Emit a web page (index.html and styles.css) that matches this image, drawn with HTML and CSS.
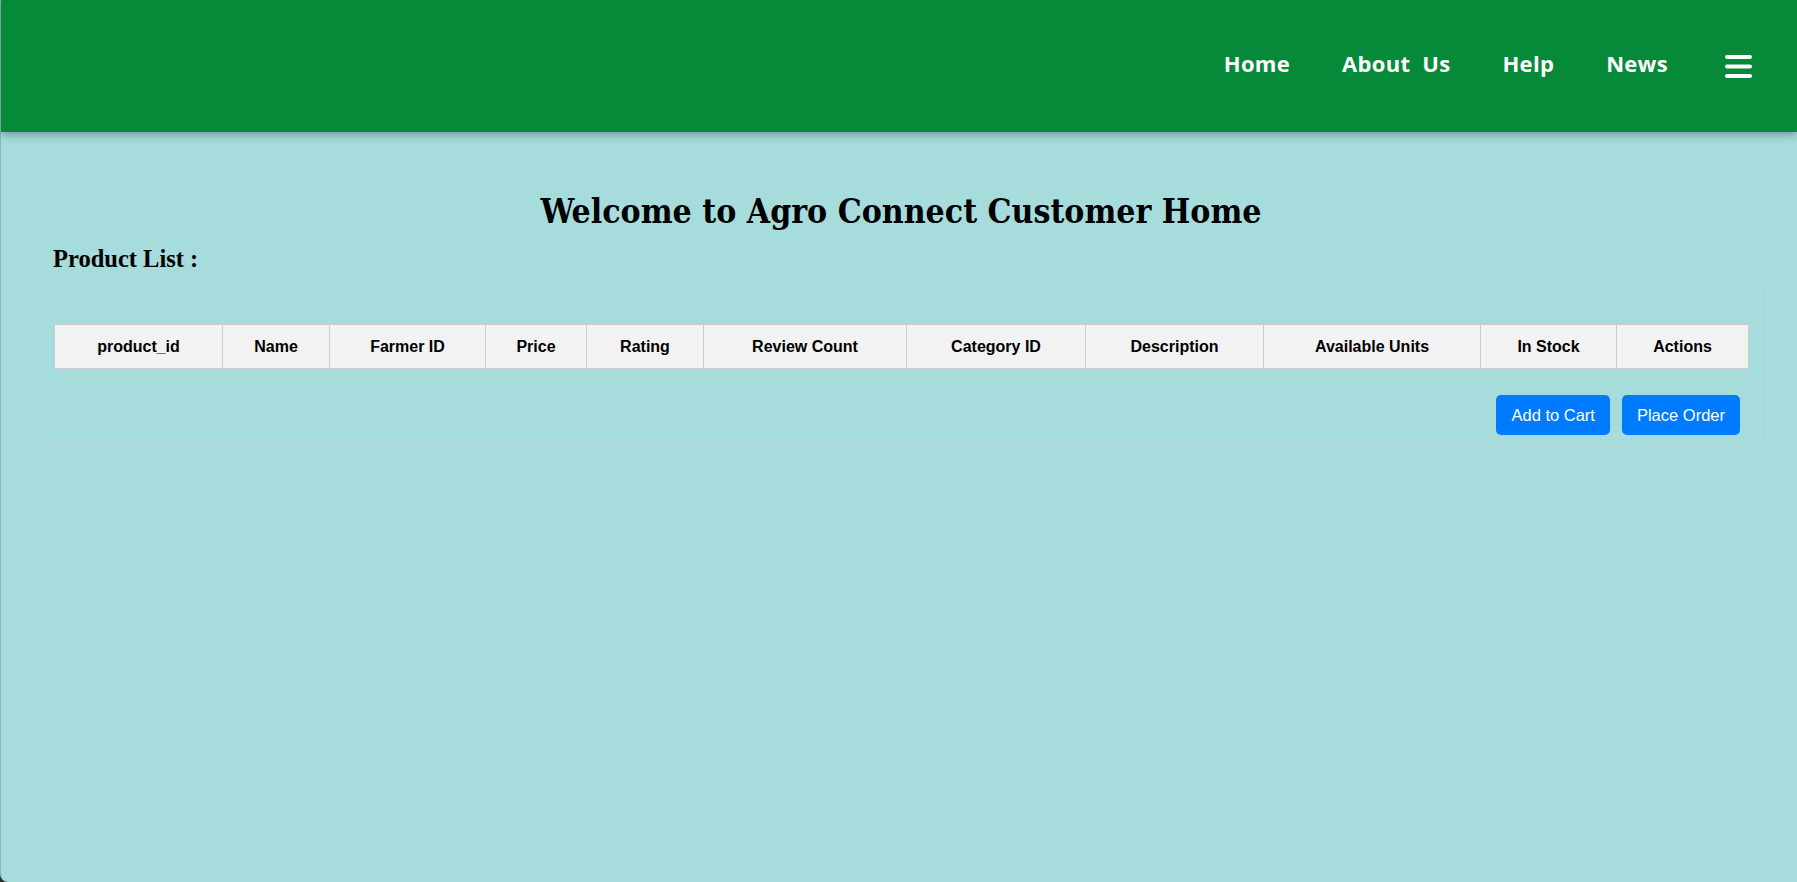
FILE: index.html
```html
<!DOCTYPE html>
<html lang="en">
<head>
<meta charset="utf-8">
<title>Agro Connect - Customer Home</title>
<link rel="stylesheet" href="styles.css">
</head>
<body>
<div class="frame">
  <header class="topbar">
    <nav class="nav">
      <a class="nav-link" href="#">Home</a>
      <a class="nav-link" href="#">About Us</a>
      <a class="nav-link" href="#">Help</a>
      <a class="nav-link" href="#">News</a>
      <button class="menu-toggle" aria-label="Menu">
        <svg width="27" height="23" viewBox="0 0 27 23">
          <path d="M2 2H25M2 11.5H25M2 21H25" stroke="#fff" stroke-width="4" stroke-linecap="round" fill="none"/>
        </svg>
      </button>
    </nav>
  </header>
  <main class="content">
    <h1 class="title">Welcome to Agro Connect Customer Home</h1>
    <h2 class="section-title">Product List :</h2>
    <section class="card">
      <table class="products">
        <colgroup>
          <col class="c-id"><col class="c-name"><col class="c-farmer"><col class="c-price">
          <col class="c-rating"><col class="c-review"><col class="c-cat"><col class="c-desc">
          <col class="c-units"><col class="c-stock"><col class="c-actions">
        </colgroup>
        <thead>
          <tr>
            <th>product_id</th>
            <th>Name</th>
            <th>Farmer ID</th>
            <th>Price</th>
            <th>Rating</th>
            <th>Review Count</th>
            <th>Category ID</th>
            <th>Description</th>
            <th>Available Units</th>
            <th>In Stock</th>
            <th>Actions</th>
          </tr>
        </thead>
        <tbody></tbody>
      </table>
      <div class="actions">
        <button class="btn">Add to Cart</button>
        <button class="btn">Place Order</button>
      </div>
    </section>
  </main>
</div>
</body>
</html>
```
FILE: styles.css
```css
html, body {
  margin: 0;
  padding: 0;
  height: 100%;
  background: #2b2b2b;
}

.frame {
  min-height: 100%;
  box-sizing: border-box;
  background: #a6dcdc;
  border-left: 1px solid #86b9b9;
  border-bottom-left-radius: 8px;
  font-family: "Liberation Sans", Arial, sans-serif;
}

.topbar {
  height: 132px;
  background: #07893a;
  box-shadow: 0 3px 8px rgba(0, 0, 0, 0.3);
  display: flex;
  align-items: center;
  justify-content: flex-end;
  position: relative;
}

.nav {
  display: flex;
  align-items: center;
  gap: 52px;
  padding-right: 45px;
  margin-top: -6px;
}

.nav-link {
  color: #fff;
  text-decoration: none;
  font-family: "Comic Sans MS", "Open Sans", sans-serif;
  font-weight: 700;
  font-size: 22px;
  letter-spacing: 0.3px;
  word-spacing: 6px;
  line-height: 30px;
}

.menu-toggle {
  margin-left: 5px;
  padding: 0;
  border: none;
  background: none;
  display: flex;
  cursor: pointer;
  margin-top: 6px;
}

.content {
  padding: 0 36px 40px 40px;
}

.title {
  margin: 60px 0 0;
  text-align: center;
  font-family: "DejaVu Serif Condensed", "DejaVu Serif", serif;
  font-stretch: condensed;
  font-weight: 700;
  font-size: 33.5px;
  line-height: 40px;
  color: #000;
}

.section-title {
  margin: 13px 0 9px 12px;
  font-family: "Liberation Serif", "Times New Roman", serif;
  font-weight: 700;
  font-size: 24.5px;
  line-height: 28px;
  color: #000;
}

.card {
  border: 1px solid #bcd8d8;
  border-radius: 8px;
  padding: 41px 12px 11px 12px;
}

.products {
  width: 100%;
  table-layout: fixed;
  border-collapse: collapse;
}

.products th {
  background: #f2f2f2;
  border: 1px solid #cccccc;
  padding: 12px 4px;
  font-size: 16px;
  font-weight: 700;
  line-height: 19px;
  color: #000;
  text-align: center;
  white-space: nowrap;
}

.c-id { width: 168px; }
.c-name { width: 107px; }
.c-farmer { width: 156px; }
.c-price { width: 101px; }
.c-rating { width: 117px; }
.c-review { width: 203px; }
.c-cat { width: 179px; }
.c-desc { width: 178px; }
.c-units { width: 217px; }
.c-stock { width: 136px; }
.c-actions { width: 132px; }

.actions {
  display: flex;
  justify-content: flex-end;
  gap: 12px;
  margin-top: 26px;
  padding-right: 8px;
}

.btn {
  height: 40px;
  padding: 0 15px;
  border: none;
  border-radius: 5px;
  background: #007bff;
  color: #fff;
  font-family: "Liberation Sans", Arial, sans-serif;
  font-size: 16.5px;
  cursor: pointer;
}
```
